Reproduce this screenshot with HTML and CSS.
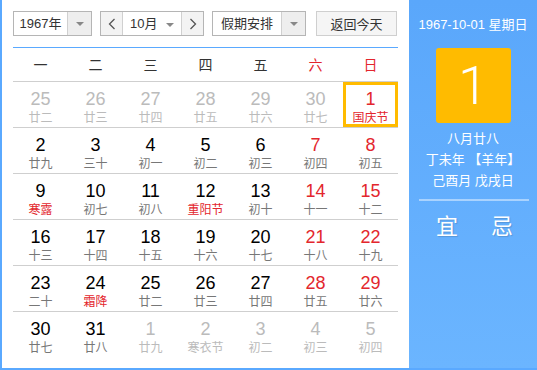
FILE: index.html
```html
<!DOCTYPE html>
<html lang="zh-CN">
<head>
    <meta charset="UTF-8">
    <title>万年历</title>
    <link rel="stylesheet" href="styles.css">
</head>
<body>
<div class="calendar">
    <div class="main">
        <div class="toolbar">
            <div class="select year-select">
                <span class="select-text">1967年</span>
                <span class="select-arrow"><i class="caret"></i></span>
            </div>
            <div class="month-group">
                <span class="nav-btn">
                    <svg width="8" height="12" viewBox="0 0 8 12"><path d="M6.5 1 L1.5 6 L6.5 11" fill="none" stroke="#555" stroke-width="1.3"/></svg>
                </span>
                <span class="month-select">10月 <i class="caret"></i></span>
                <span class="nav-btn">
                    <svg width="8" height="12" viewBox="0 0 8 12"><path d="M1.5 1 L6.5 6 L1.5 11" fill="none" stroke="#555" stroke-width="1.3"/></svg>
                </span>
            </div>
            <div class="select holiday-select">
                <span class="select-text">假期安排</span>
                <span class="select-arrow"><i class="caret"></i></span>
            </div>
            <button class="today-btn">返回今天</button>
        </div>

        <div class="weekdays">
            <span>一</span><span>二</span><span>三</span><span>四</span><span>五</span>
            <span class="red">六</span><span class="red">日</span>
        </div>

        <div class="days">
            <div class="day other"><b>25</b><em>廿二</em></div>
            <div class="day other"><b>26</b><em>廿三</em></div>
            <div class="day other"><b>27</b><em>廿四</em></div>
            <div class="day other"><b>28</b><em>廿五</em></div>
            <div class="day other"><b>29</b><em>廿六</em></div>
            <div class="day other"><b>30</b><em>廿七</em></div>
            <div class="day weekend today"><b>1</b><em class="fest">国庆节</em></div>

            <div class="day"><b>2</b><em>廿九</em></div>
            <div class="day"><b>3</b><em>三十</em></div>
            <div class="day"><b>4</b><em>初一</em></div>
            <div class="day"><b>5</b><em>初二</em></div>
            <div class="day"><b>6</b><em>初三</em></div>
            <div class="day weekend"><b>7</b><em>初四</em></div>
            <div class="day weekend"><b>8</b><em>初五</em></div>

            <div class="day"><b>9</b><em class="fest">寒露</em></div>
            <div class="day"><b>10</b><em>初七</em></div>
            <div class="day"><b>11</b><em>初八</em></div>
            <div class="day"><b>12</b><em class="fest">重阳节</em></div>
            <div class="day"><b>13</b><em>初十</em></div>
            <div class="day weekend"><b>14</b><em>十一</em></div>
            <div class="day weekend"><b>15</b><em>十二</em></div>

            <div class="day"><b>16</b><em>十三</em></div>
            <div class="day"><b>17</b><em>十四</em></div>
            <div class="day"><b>18</b><em>十五</em></div>
            <div class="day"><b>19</b><em>十六</em></div>
            <div class="day"><b>20</b><em>十七</em></div>
            <div class="day weekend"><b>21</b><em>十八</em></div>
            <div class="day weekend"><b>22</b><em>十九</em></div>

            <div class="day"><b>23</b><em>二十</em></div>
            <div class="day"><b>24</b><em class="fest">霜降</em></div>
            <div class="day"><b>25</b><em>廿二</em></div>
            <div class="day"><b>26</b><em>廿三</em></div>
            <div class="day"><b>27</b><em>廿四</em></div>
            <div class="day weekend"><b>28</b><em>廿五</em></div>
            <div class="day weekend"><b>29</b><em>廿六</em></div>

            <div class="day"><b>30</b><em>廿七</em></div>
            <div class="day"><b>31</b><em>廿八</em></div>
            <div class="day other"><b>1</b><em>廿九</em></div>
            <div class="day other"><b>2</b><em>寒衣节</em></div>
            <div class="day other"><b>3</b><em>初二</em></div>
            <div class="day other"><b>4</b><em>初三</em></div>
            <div class="day other"><b>5</b><em>初四</em></div>
        </div>
    </div>

    <div class="side">
        <div class="side-date">1967-10-01 星期日</div>
        <div class="side-day">1</div>
        <div class="side-lunar">
            <p>八月廿八</p>
            <p>丁未年 【羊年】</p>
            <p>己酉月 戊戌日</p>
        </div>
        <div class="side-line"></div>
        <div class="side-yiji">
            <span>宜</span><span>忌</span>
        </div>
    </div>
</div>
</body>
</html>
```

FILE: styles.css
```css
body {
    margin: 0;
    padding: 0;
    font-family: "Liberation Sans", "Noto Sans CJK SC", sans-serif;
    background-color: #fff;
}
.calendar {
    display: flex;
    width: 535px;
    height: 368px;
    border-left: 2px solid #5aa9ff;
    border-bottom: 2px solid #5aa9ff;
}
.main {
    width: 385px;
    padding: 11px 11px 0 11px;
    background-color: #fff;
}

/* toolbar */
.toolbar {
    display: flex;
    height: 25px;
    font-size: 13px;
    color: #333;
}
.select {
    display: flex;
    box-sizing: border-box;
    height: 25px;
    border: 1px solid #b5b5b5;
    background-color: #fff;
}
.select-text {
    flex: 1;
    text-align: center;
    line-height: 23px;
}
.select-arrow {
    display: flex;
    align-items: center;
    justify-content: center;
    width: 23px;
    background-color: #eee;
    border-left: 1px solid #d0d0d0;
}
.caret {
    display: inline-block;
    width: 0;
    height: 0;
    border-left: 4px solid transparent;
    border-right: 4px solid transparent;
    border-top: 4px solid #888;
    vertical-align: middle;
}
.year-select {
    width: 79px;
}
.month-group {
    display: flex;
    box-sizing: border-box;
    width: 104px;
    height: 25px;
    margin-left: 8px;
    border: 1px solid #b5b5b5;
}
.nav-btn {
    display: flex;
    align-items: center;
    justify-content: center;
    width: 21px;
    background-color: #f3f3f3;
}
.month-select {
    flex: 1;
    line-height: 23px;
    text-align: center;
    border-left: 1px solid #d0d0d0;
    border-right: 1px solid #d0d0d0;
    background-color: #fff;
}
.month-select .caret {
    margin-left: 5px;
}
.holiday-select {
    width: 94px;
    margin-left: 8px;
}
.today-btn {
    box-sizing: border-box;
    width: 81px;
    height: 25px;
    margin-left: 10px;
    padding: 0;
    border: 1px solid #cfcfcf;
    background-color: #f5f5f5;
    font-family: inherit;
    font-size: 13px;
    color: #333;
}

/* weekdays */
.weekdays {
    display: grid;
    grid-template-columns: repeat(7, 55px);
    height: 33px;
    margin-top: 11px;
    border-top: 1px solid #5aa9ff;
    font-size: 14px;
    line-height: 35px;
    text-align: center;
    color: #333;
}
.weekdays .red {
    color: #e3262d;
}

/* days */
.days {
    display: grid;
    grid-template-columns: repeat(7, 55px);
    grid-auto-rows: 46px;
}
.day {
    box-sizing: border-box;
    padding-top: 6px;
    border-top: 1px solid #cfcfcf;
    text-align: center;
}
.day b {
    display: block;
    font-weight: normal;
    font-size: 18px;
    line-height: 22px;
    color: #000;
}
.day em {
    display: block;
    font-style: normal;
    font-size: 12px;
    line-height: 16px;
    color: #777;
}
.day.weekend b {
    color: #e3262d;
}
.day em.fest {
    color: #e3262d;
}
.day.other b {
    color: #bbb;
}
.day.other em {
    color: #bbb;
}
.day.today {
    box-shadow: inset 0 0 0 3px #ffbb00;
}

/* side panel */
.side {
    flex: 1;
    background: linear-gradient(#5aa7fb, #6bb5ff);
    color: #fff;
    text-align: center;
}
.side-date {
    margin-top: 16px;
    font-size: 13px;
    line-height: 17px;
}
.side-day {
    width: 75px;
    height: 75px;
    margin: 15px auto 0;
    border-radius: 3px;
    background-color: #ffbb00;
    font-family: Roboto, "Liberation Sans", sans-serif;
    font-weight: 300;
    font-size: 54px;
    line-height: 75px;
}
.side-lunar {
    margin-top: 5px;
    font-size: 13px;
}
.side-lunar p {
    margin: 0;
    line-height: 21px;
}
.side-line {
    height: 2px;
    margin: 8px 8px 0 10px;
    background-color: rgba(255, 255, 255, 0.45);
}
.side-yiji {
    display: flex;
    justify-content: space-between;
    padding: 0 24px 0 27px;
    margin-top: 12px;
    font-size: 22px;
    line-height: 28px;
    text-shadow: 1px 1px 1px rgba(0, 0, 0, 0.15);
}
```
